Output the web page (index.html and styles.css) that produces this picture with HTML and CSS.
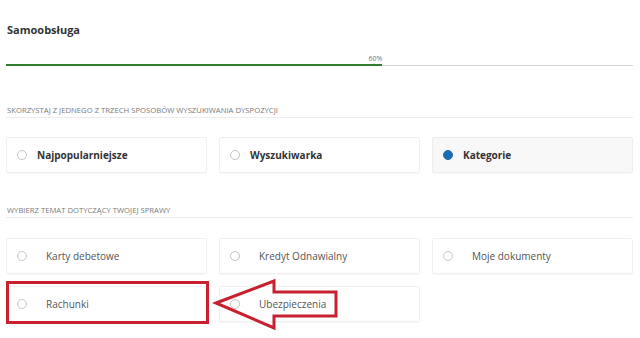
FILE: index.html
```html
<!DOCTYPE html>
<html lang="pl">
<head>
  <meta charset="UTF-8" />
  <title>Samoobsługa</title>
  <link rel="stylesheet" href="styles.css">
</head>
<body>
  <div class="page">
    <h1 class="title">Samoobsługa</h1>

    <div class="progress">
      <div class="progress-label" style="width: 60%">60%</div>
      <div class="progress-track"><div class="progress-fill" style="width: 60%"></div></div>
    </div>

    <div class="section-head">Skorzystaj z jednego z trzech sposobów wyszukiwania dyspozycji</div>
    <div class="options">
      <div class="option strong"><span class="radio"></span>Najpopularniejsze</div>
      <div class="option strong"><span class="radio"></span>Wyszukiwarka</div>
      <div class="option strong selected"><span class="radio"></span>Kategorie</div>
    </div>

    <div class="section-head second">Wybierz temat dotyczący twojej sprawy</div>
    <div class="options topics">
      <div class="option"><span class="radio"></span>Karty debetowe</div>
      <div class="option"><span class="radio"></span>Kredyt Odnawialny</div>
      <div class="option"><span class="radio"></span>Moje dokumenty</div>
      <div class="option"><span class="radio"></span>Rachunki</div>
      <div class="option"><span class="radio"></span>Ubezpieczenia</div>
    </div>

    <div class="highlight"></div>
    <svg class="arrow" width="130" height="56" viewBox="0 0 130 56">
      <polygon points="4,25 62,3 62,14 124,14 124,38 62,38 62,50" fill="none" stroke="#c8202f" stroke-width="3" stroke-linejoin="miter" />
    </svg>
  </div>
</body>
</html>
```

FILE: styles.css
```css
body { margin: 0; background: #fff; font-family: "Open Sans", "Liberation Sans", sans-serif; color: #333; }
.page { position: relative; padding: 22px 7px 30px 6px; }
.title { margin: 0 0 0 1px; font-size: 11px; line-height: 15px; font-weight: 700; color: #333; }

.progress { margin-top: 17px; }
.progress-label { font-size: 7px; line-height: 10px; color: #777; text-align: right; }
.progress-track { height: 2px; background: linear-gradient(#fff 0, #fff 50%, #d4d4d4 50%); }
.progress-fill { height: 2px; background: #2f7d2f; }

.section-head { margin-top: 39px; padding: 0 0 2px 1px; font-size: 7.7px; line-height: 10px; text-transform: uppercase; color: #7a7a7a; border-bottom: 1px solid #ececec; }
.section-head.second { margin-top: 32px; }

.options { display: grid; grid-template-columns: repeat(3, 1fr); gap: 12px; margin-top: 19px; }
.topics { margin-top: 20px; }
.option { display: flex; align-items: center; height: 36px; box-sizing: border-box; padding-left: 10px; border: 1px solid #f0f0f0; border-radius: 2px; box-shadow: 0 1px 1px rgba(0,0,0,0.03); font-size: 10px; color: #555; }
.option.strong { font-weight: 700; color: #333; }
.option.selected { background: #f8f8f8; border-color: #ededed; }
.radio { width: 10px; height: 10px; box-sizing: border-box; border: 1px solid #c4c4c4; border-radius: 50%; margin-right: 19px; flex: none; background: #fff; }
.strong .radio { margin-right: 10px; }
.selected .radio { background: #1a6db3; border-color: #1a6db3; }

.highlight { position: absolute; left: 6px; top: 281px; width: 203px; height: 43px; box-sizing: border-box; border: 3px solid #c8202f; }
.arrow { position: absolute; left: 212px; top: 278px; }
```
